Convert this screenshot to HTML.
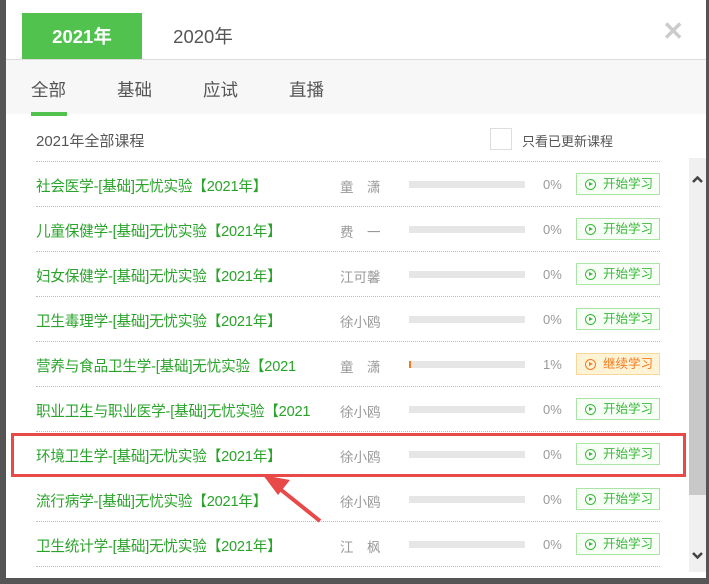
<!DOCTYPE html>
<html><head><meta charset="utf-8"><style>
*{margin:0;padding:0;box-sizing:border-box}
body{width:709px;height:584px;overflow:hidden;background:#555;font-family:"Liberation Sans","Noto Sans CJK SC",sans-serif;position:relative}
.modal{position:absolute;left:6px;top:0;width:700px;height:578px;background:#fff;overflow:hidden}
.ytab{position:absolute;top:13px;height:47px;line-height:47px;font-size:18.5px;text-align:center;width:120px}
.t1{left:16px;background:#52c24f;color:#fff;font-weight:bold}
.t2{left:142px;color:#555;width:110px}
.close{position:absolute;right:22px;top:18px;font-size:26px;color:#ccc;line-height:26px;font-weight:bold}
.bar{position:absolute;top:59px;left:0;width:700px;height:55px;background:#f7f7f7;border-top:1px solid #ddd}
.bar span{position:absolute;top:17px;font-size:17.5px;color:#555}
.ul{position:absolute;left:25px;top:112px;width:36px;height:4px;background:#52c24f}
.sub{position:absolute;left:30px;top:130px;font-size:15px;color:#555}
.cb{position:absolute;left:484px;top:128px;width:22px;height:22px;border:1px solid #ddd;background:#fff}
.cbl{position:absolute;left:516px;top:131px;font-size:13px;color:#555}
.row{position:absolute;left:30px;width:624px;height:45px;border-top:1px dotted #bbb}
.row .n{position:absolute;left:0;top:13px;font-size:14.6px;color:#2aa32a;white-space:nowrap;letter-spacing:-0.2px}
.row .t{position:absolute;left:304px;top:14px;font-size:13.5px;color:#999;white-space:pre}
.row .p{position:absolute;left:373px;top:19px;width:116px;height:7px;background:#e6e6e6}
.row .pc{position:absolute;left:507px;top:15px;font-size:13px;color:#999}
.row .b{position:absolute;left:540px;top:11px;width:84px;height:22px;border:1px solid #a9e4a5;background:#f7fff6;color:#3cb83c;font-size:12.5px;line-height:20px;padding-left:26px}
.row .b i{position:absolute;left:8px;top:5px;width:11px;height:11px;border:1px solid currentColor;border-radius:50%}
.row .b i:after{content:"";position:absolute;left:3px;top:2px;border-left:4px solid currentColor;border-top:2.5px solid transparent;border-bottom:2.5px solid transparent}
.row .b.o{border-color:#f7d79a;background:#fff3d6;color:#f57a1c}
.sb{position:absolute;left:683px;top:158px;width:17px;height:414px;background:#f0f0f0}
.th{position:absolute;left:683px;top:360px;width:17px;height:135px;background:#c8c8c8}
.red{position:absolute;left:11px;top:433px;width:675px;height:44px;border:3px solid #e84a4a}
</style></head><body>
<div class="modal">
<div class="ytab t1">2021年</div><div class="ytab t2">2020年</div>
<div class="close">✕</div>
<div class="bar"><span style="left:25px">全部</span><span style="left:111px">基础</span><span style="left:197px">应试</span><span style="left:283px">直播</span></div>
<div class="ul"></div>
<div class="sub">2021年全部课程</div>
<div class="cb"></div><div class="cbl">只看已更新课程</div>
<div class="row" style="top:161px"><div class="n">社会医学-[基础]无忧实验【2021年】</div><div class="t">童　潇</div><div class="p"></div><div class="pc">0%</div><div class="b"><i></i>开始学习</div></div>
<div class="row" style="top:206px"><div class="n">儿童保健学-[基础]无忧实验【2021年】</div><div class="t">费　一</div><div class="p"></div><div class="pc">0%</div><div class="b"><i></i>开始学习</div></div>
<div class="row" style="top:251px"><div class="n">妇女保健学-[基础]无忧实验【2021年】</div><div class="t">江可馨</div><div class="p"></div><div class="pc">0%</div><div class="b"><i></i>开始学习</div></div>
<div class="row" style="top:296px"><div class="n">卫生毒理学-[基础]无忧实验【2021年】</div><div class="t">徐小鸥</div><div class="p"></div><div class="pc">0%</div><div class="b"><i></i>开始学习</div></div>
<div class="row" style="top:341px"><div class="n">营养与食品卫生学-[基础]无忧实验【2021</div><div class="t">童　潇</div><div class="p" style="border-left:2px solid #f57a1c"></div><div class="pc">1%</div><div class="b o"><i></i>继续学习</div></div>
<div class="row" style="top:386px"><div class="n">职业卫生与职业医学-[基础]无忧实验【2021</div><div class="t">徐小鸥</div><div class="p"></div><div class="pc">0%</div><div class="b"><i></i>开始学习</div></div>
<div class="row" style="top:431px"><div class="n">环境卫生学-[基础]无忧实验【2021年】</div><div class="t">徐小鸥</div><div class="p"></div><div class="pc">0%</div><div class="b"><i></i>开始学习</div></div>
<div class="row" style="top:476px"><div class="n">流行病学-[基础]无忧实验【2021年】</div><div class="t">徐小鸥</div><div class="p"></div><div class="pc">0%</div><div class="b"><i></i>开始学习</div></div>
<div class="row" style="top:521px"><div class="n">卫生统计学-[基础]无忧实验【2021年】</div><div class="t">江　枫</div><div class="p"></div><div class="pc">0%</div><div class="b"><i></i>开始学习</div></div>
<div class="row" style="top:566px"></div>
<div class="sb"></div><div class="th"></div>
<svg style="position:absolute;left:683px;top:170px" width="17" height="400"><path d="M4 12l4.5-4.5L13 12" stroke="#444" stroke-width="2.5" fill="none"/><path d="M4 383l4.5 4.5L13 383" stroke="#444" stroke-width="2.5" fill="none"/></svg>
</div>
<div class="red"></div>
<svg style="position:absolute;left:0;top:0" width="709" height="584"><path d="M320 521L275 485" stroke="#e84a4a" stroke-width="4"/><path d="M263 475L290 480L278 495Z" fill="#e84a4a"/></svg>
</body></html>
